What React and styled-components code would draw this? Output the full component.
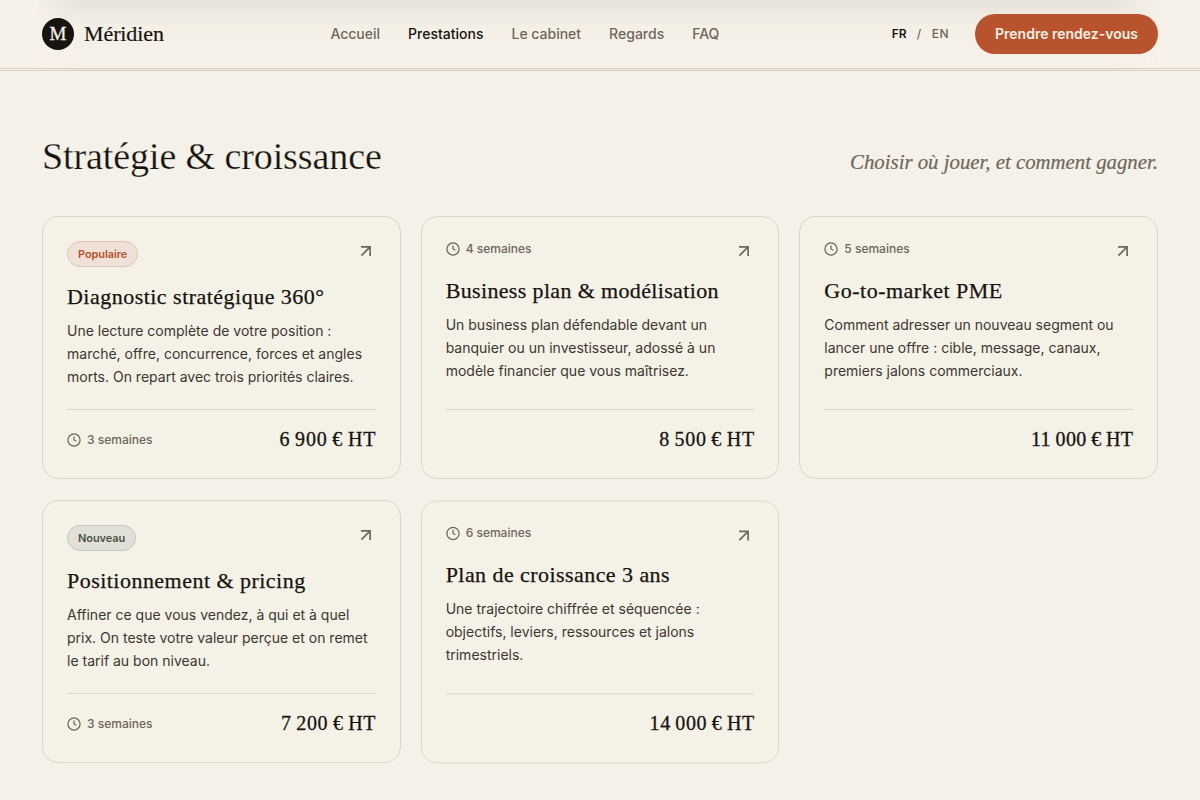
import React from 'react';
import styled, { createGlobalStyle, css } from 'styled-components';

const serif = '"Liberation Serif", "Times New Roman", serif';
const sans = 'Inter, "Liberation Sans", sans-serif';

const GlobalStyle = createGlobalStyle`
    * {
        box-sizing:border-box;
    }
    body {
        margin:0;
        background:#f4f1e8;
        color:#17140f;
        font-family:${sans};
    }
    h2, h3, p {
        margin:0;
        font-weight:400;
    }
`;

const Page = styled.div`
    height:800px;
    overflow:hidden;
`;

const Header = styled.header`
    height:71px;
    padding:0 42px;
    display:flex;
    align-items:center;
    justify-content:space-between;
    border-bottom:3px double #dcd2c2;
    background:
        linear-gradient(to right, #f5f0e8 36px, transparent 80px, transparent 1110px, #f5f0e8 1160px),
        linear-gradient(#e8e4dd 0, #e9e5dd 5px, #f0ece3 18px, #f4f0e6 28px, #f5f0e8 50px);
`;

const Brand = styled.div`
    display:flex;
    align-items:center;
    gap:10px;
    width:288.4px;
`;

const Mark = styled.span`
    width:32px;
    height:32px;
    border-radius:50%;
    background:#17140f;
    color:#f4f0e6;
    display:flex;
    align-items:center;
    justify-content:center;
    font-family:${serif};
    font-size:19px;
    -webkit-text-stroke:0.3px;
`;

const Serif = styled.span`
    font-family:${serif};
    letter-spacing:${props => props.$track || 0}px;
    white-space:nowrap;
`;

const BrandName = styled(Serif)`
    font-size:22px;
    -webkit-text-stroke:0.2px;
`;

const Nav = styled.nav`
    flex:1;
    display:flex;
    gap:28px;
    padding-bottom:2px;
`;

const NavItem = styled.a`
    font-size:14px;
    font-weight:500;
    color:${props => props.$active ? '#17140f' : '#6e675b'};
`;

const Right = styled.div`
    display:flex;
    align-items:center;
    gap:26px;
`;

const Language = styled.div`
    display:flex;
    gap:10px;
    padding-bottom:2px;
    font-size:12px;
    font-weight:500;
    letter-spacing:0.5px;
    color:#6e675b;
`;

const Current = styled.span`
    font-weight:600;
    letter-spacing:0.1px;
    color:#17140f;
`;

const Button = styled.button`
    width:183px;
    height:40px;
    padding:0 0 1px;
    border:none;
    border-radius:20px;
    background:#b8532d;
    color:#f4f0e6;
    font-family:${sans};
    font-size:14px;
    font-weight:600;
`;

const Section = styled.main`
    padding:60px 42px 0;
`;

const SectionHead = styled.div`
    height:50px;
    display:flex;
    align-items:baseline;
    justify-content:space-between;
    margin-bottom:35px;
`;

/* the outline in the page colour thins the letters to a light weight */
const Title = styled(Serif).attrs({ as: 'h2' })`
    font-size:38px;
    line-height:50px;
    -webkit-text-stroke:0.25px #f4f1e8;
`;

const Tagline = styled(Serif).attrs({ as: 'p' })`
    font-size:20.8px;
    font-style:italic;
    color:#6e675b;
    -webkit-text-stroke:0.2px;
`;

const Grid = styled.div`
    display:grid;
    grid-template-columns:repeat(3, 1fr);
    gap:21px 20px;
`;

const Card = styled.article`
    height:263px;
    padding:24px;
    display:flex;
    flex-direction:column;
    border:1px solid #dcd6c5;
    border-radius:16px;
    background:#f4f1e7;

    &:nth-child(5) {
        transform:translateY(0.45px);
    }
`;

const CardTop = styled.div`
    display:flex;
    align-items:flex-start;
    justify-content:space-between;
    height:${props => props.$badge ? 26 : 20}px;
    margin-bottom:15px;
`;

const tones = {
    popular: css`
        color:#b8532d;
        background:#efe1d6;
        border-color:#e5c5b5;
    `,
    fresh: css`
        color:#47563f;
        background:#e1e0d8;
        border-color:#c5c8be;
    `,
};

const Badge = styled.span`
    height:26px;
    padding:0 10px;
    display:flex;
    align-items:center;
    border:1px solid;
    border-radius:13px;
    font-size:11px;
    font-weight:600;
    letter-spacing:-0.08px;
    ${props => tones[props.$tone]}
`;

const Meta = styled.span`
    display:flex;
    align-items:center;
    gap:6px;
    height:16px;
    font-size:12px;
    line-height:16px;
    font-weight:500;
    color:#6e675b;
`;

const ArrowIcon = styled.svg`
    width:20px;
    height:20px;
    flex:none;
    color:#6e675b;
`;

const CardTitle = styled(Serif).attrs({ as: 'h3' })`
    font-size:22px;
    line-height:30px;
    -webkit-text-stroke:0.25px;
`;

const Text = styled.p`
    margin-top:7px;
    font-size:14px;
    line-height:23px;
    color:#3c372f;
`;

const CardFoot = styled.div`
    margin-top:auto;
    height:45px;
    padding-top:16px;
    display:flex;
    align-items:center;
    justify-content:space-between;
    border-top:1px solid #dcd6c5;
`;

const Price = styled(Serif)`
    margin-left:auto;
    margin-right:-0.5px;
    padding-bottom:1px;
    font-size:20px;
    line-height:27px;
    word-spacing:-1px;
    -webkit-text-stroke:0.3px;
`;

const Arrow = () => (
    <ArrowIcon viewBox="0 0 20 20" fill="none" stroke="currentColor" strokeWidth="1.7">
        <path d="M5.4 14.6 14.1 5.9M5 5.9h9.1V15" />
    </ArrowIcon>
);

const Duration = ({ children }) => (
    <Meta>
        <svg width="14" height="14" viewBox="0 0 14 14" fill="none" stroke="currentColor" strokeWidth="1.25">
            <circle cx="7" cy="7" r="6.1" />
            <path d="M7 3.4V7l2.4 1.3" />
        </svg>
        {children}
    </Meta>
);

const links = ['Accueil', 'Prestations', 'Le cabinet', 'Regards', 'FAQ'];

const services = [
    {
        badge: 'Populaire',
        tone: 'popular',
        title: 'Diagnostic stratégique 360°',
        track: 0.48,
        text: ['Une lecture complète de votre position :', 'marché, offre, concurrence, forces et angles', 'morts. On repart avec trois priorités claires.'],
        duration: '3 semaines',
        price: '6 900 € HT',
        priceTrack: 0.8,
    },
    {
        title: 'Business plan & modélisation',
        track: 0.35,
        text: ['Un business plan défendable devant un', 'banquier ou un investisseur, adossé à un', 'modèle financier que vous maîtrisez.'],
        duration: '4 semaines',
        price: '8 500 € HT',
        priceTrack: 0.7,
    },
    {
        title: 'Go-to-market PME',
        track: 0.5,
        text: ['Comment adresser un nouveau segment ou', 'lancer une offre : cible, message, canaux,', 'premiers jalons commerciaux.'],
        duration: '5 semaines',
        price: '11 000 € HT',
        priceTrack: 0.42,
    },
    {
        badge: 'Nouveau',
        tone: 'fresh',
        title: 'Positionnement & pricing',
        track: 0.47,
        text: ['Affiner ce que vous vendez, à qui et à quel', 'prix. On teste votre valeur perçue et on remet', 'le tarif au bon niveau.'],
        duration: '3 semaines',
        price: '7 200 € HT',
        priceTrack: 0.65,
    },
    {
        title: 'Plan de croissance 3 ans',
        track: 0.44,
        text: ['Une trajectoire chiffrée et séquencée :', 'objectifs, leviers, ressources et jalons', 'trimestriels.'],
        duration: '6 semaines',
        price: '14 000 € HT',
        priceTrack: 0.6,
    },
];

const Service = ({ item }) => (
    <Card>
        <CardTop $badge={item.badge}>
            {item.badge ? <Badge $tone={item.tone}>{item.badge}</Badge> : <Duration>{item.duration}</Duration>}
            <Arrow />
        </CardTop>
        <CardTitle $track={item.track}>{item.title}</CardTitle>
        <Text>
            {item.text.map((line, i) => (
                <React.Fragment key={line}>{i > 0 && <br />}{line}</React.Fragment>
            ))}
        </Text>
        <CardFoot>
            {item.badge && <Duration>{item.duration}</Duration>}
            <Price $track={item.priceTrack}>{item.price}</Price>
        </CardFoot>
    </Card>
);

const App = () => {
    return (
        <Page>
            <GlobalStyle />
            <Header>
                <Brand>
                    <Mark>M</Mark>
                    <BrandName $track={-0.1}>Méridien</BrandName>
                </Brand>
                <Nav>
                    {links.map(link => (
                        <NavItem key={link} $active={link === 'Prestations'}>{link}</NavItem>
                    ))}
                </Nav>
                <Right>
                    <Language>
                        <Current>FR</Current>
                        <span>/</span>
                        <span>EN</span>
                    </Language>
                    <Button>Prendre rendez-vous</Button>
                </Right>
            </Header>
            <Section>
                <SectionHead>
                    <Title $track={-0.1}>Stratégie & croissance</Title>
                    <Tagline>Choisir où jouer, et comment gagner.</Tagline>
                </SectionHead>
                <Grid>
                    {services.map(item => <Service key={item.title} item={item} />)}
                </Grid>
            </Section>
        </Page>
    )
}

export default App;
